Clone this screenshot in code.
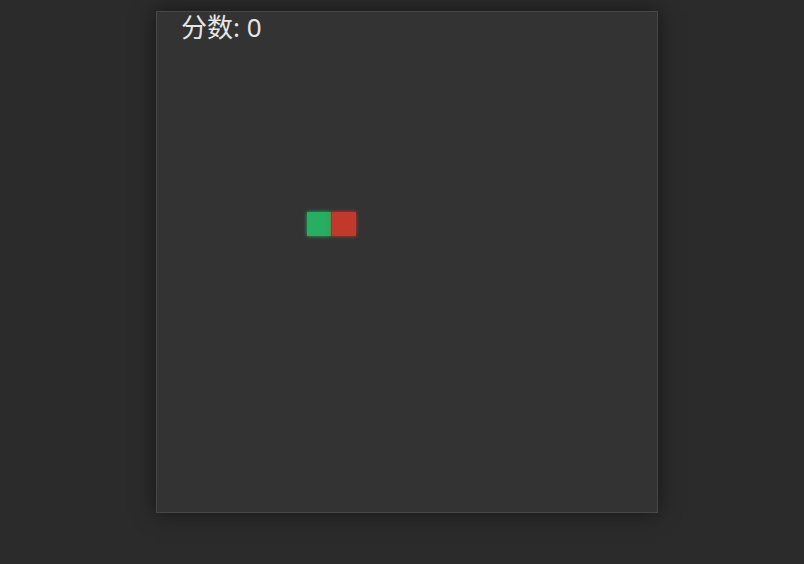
import React from 'react';

const CELL = 25;

const snake = [
  { x: 6, y: 8, color: 'bg-[#27ae60] shadow-[0_0_4px_#27ae60]' },
  { x: 7, y: 8, color: 'bg-[#c0392b] shadow-[0_0_4px_#c0392b]' },
];

const App: React.FC = () => {
  return (
    <div className="min-h-[564px] bg-[#2b2b2b] pt-[11px] pl-[156px]">
      <div className="relative w-[502px] h-[502px] border border-[#474747] bg-[#333333] shadow-[0_0_20px_rgba(0,0,0,0.5)]">
        <div
          className="absolute top-[-3px] left-[24px] text-[26px] leading-[36px] text-[#e6e6e6]"
          style={{ fontFamily: '"Noto Sans", "Noto Sans CJK SC", sans-serif' }}
        >
          分数: 0
        </div>
        {snake.map((s, i) => (
          <div
            key={i}
            className={`absolute w-[24px] h-[24px] ${s.color}`}
            style={{ left: s.x * CELL, top: s.y * CELL }}
          />
        ))}
      </div>
    </div>
  );
};

export default App;
